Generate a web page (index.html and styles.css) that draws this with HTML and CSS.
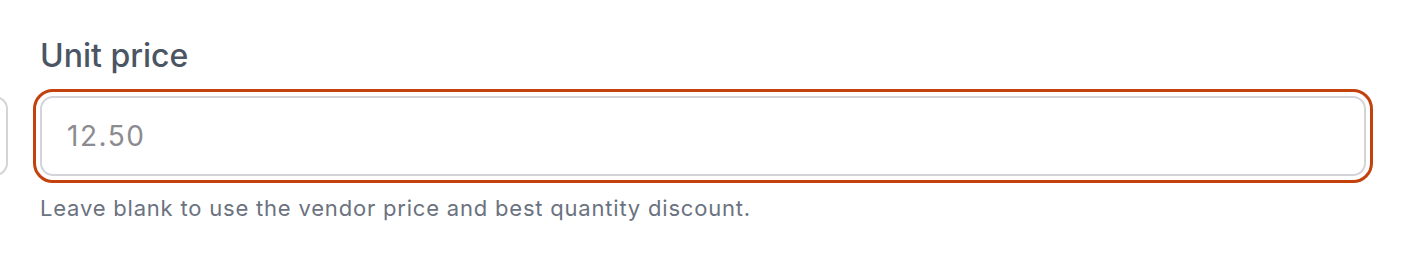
FILE: index.html
```html
<!DOCTYPE html>
<html lang="en">
<head>
	<meta charset="UTF-8">
	<title>Unit price</title>
	<link rel="stylesheet" href="styles.css">
</head>
<body>
	<div class="row">
		<div class="field field-prev">
			<label class="label">Quantity</label>
			<input type="text" class="ipt" placeholder="1">
		</div>
		<div class="field field-main">
			<label class="label" for="price">Unit price</label>
			<input type="text" class="ipt focus" id="price" placeholder="12.50">
			<p class="help">Leave blank to use the vendor price and best quantity discount.</p>
		</div>
	</div>
</body>
</html>
```

FILE: styles.css
```css
*{margin: 0;padding: 0;box-sizing: border-box;}
body{background: #fff;font-family: Inter, "Noto Sans", sans-serif;overflow: hidden;}
.row{display: flex;gap: 32px;margin-left: -292px;padding-top: 34px;width: 1658px;}
.field{display: flex;flex-direction: column;}
.field-prev{width: 300px;flex: none;}
.field-prev .label{visibility: hidden;}
.field-main{flex: 1;}
.label{font-size: 32px;font-weight: 500;color: #4b5563;line-height: 44px;margin-bottom: 18px;}
.ipt{height: 80px;width: 100%;border: 2px solid #d4d4d8;border-radius: 13px;padding: 0 25px;font-family: inherit;font-size: 28px;letter-spacing: 1.5px;color: #111827;background: #fff;outline: none;}
.ipt::placeholder{color: #8b8b90;}
.focus{outline: 3px solid #c2410c;outline-offset: 4px;}
.help{font-size: 22px;letter-spacing: 0.8px;color: #6b7280;margin-top: 18px;line-height: 28px;}
```
